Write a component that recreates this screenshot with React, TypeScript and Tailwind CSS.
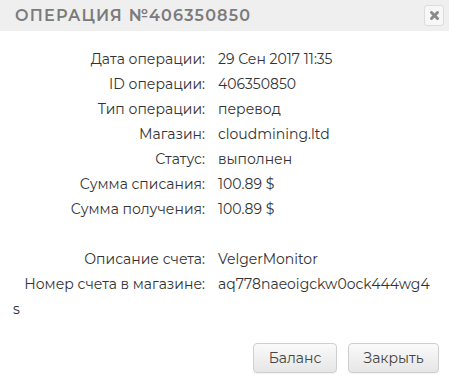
import React from 'react';

const rows: [string, string][] = [
  ['Дата операции:', '29 Сен 2017 11:35'],
  ['ID операции:', '406350850'],
  ['Тип операции:', 'перевод'],
  ['Магазин:', 'cloudmining.ltd'],
  ['Статус:', 'выполнен'],
  ['Сумма списания:', '100.89 $'],
  ['Сумма получения:', '100.89 $'],
];

function Row({ label, children }: { label: string; children: React.ReactNode }) {
  return (
    <div>
      <span className="inline-block w-[192px] text-right mr-[13px]">{label}</span>
      {children}
    </div>
  );
}

export default function App() {
  return (
    <div
      className="w-[449px] h-[380px] bg-white text-[#333] overflow-hidden"
      style={{ fontFamily: '"Montserrat", Inter, "Noto Sans", sans-serif' }}
    >
      {/* Header */}
      <div className="h-[31px] bg-[#efefef] flex items-center justify-between pl-[15px] pr-[5px]">
        <span className="text-[16px] font-semibold tracking-[1.2px] text-[#7b7b7b] uppercase">
          Операция №406350850
        </span>
        <button className="w-[20px] h-[21px] rounded-[3px] border border-[#dcdcdc] bg-[#f7f7f7] flex items-center justify-center">
          <svg width="11" height="11" viewBox="0 0 11 11">
            <path d="M2.5 2.5 L8.5 8.5 M8.5 2.5 L2.5 8.5" stroke="#8a8a8a" strokeWidth="3" strokeLinecap="round" />
          </svg>
        </button>
      </div>

      {/* Details */}
      <div className="pt-[16px] pl-[13px] pr-[10px] text-[14px] leading-[25px]">
        {rows.map(([l, v]) => (
          <Row key={l} label={l}>{v}</Row>
        ))}
        <div className="h-[25px]" />
        <Row label="Описание счета:">VelgerMonitor</Row>
        <Row label="Номер счета в магазине:">
          aq778naeoigckw0ock444wg4<br />s
        </Row>
      </div>

      {/* Footer */}
      <div className="flex justify-end gap-[11px] pr-[10px] mt-[21px]">
        <button className="w-[84px] h-[30px] rounded-[4px] border border-[#cfcfcf] bg-gradient-to-b from-[#fafafa] to-[#e6e6e6] text-[14px] text-[#444] shadow-[0_1px_1px_rgba(0,0,0,0.05)]">
          Баланс
        </button>
        <button className="w-[91px] h-[30px] rounded-[4px] border border-[#cfcfcf] bg-gradient-to-b from-[#fafafa] to-[#e6e6e6] text-[14px] text-[#444] shadow-[0_1px_1px_rgba(0,0,0,0.05)]">
          Закрыть
        </button>
      </div>
    </div>
  );
}
